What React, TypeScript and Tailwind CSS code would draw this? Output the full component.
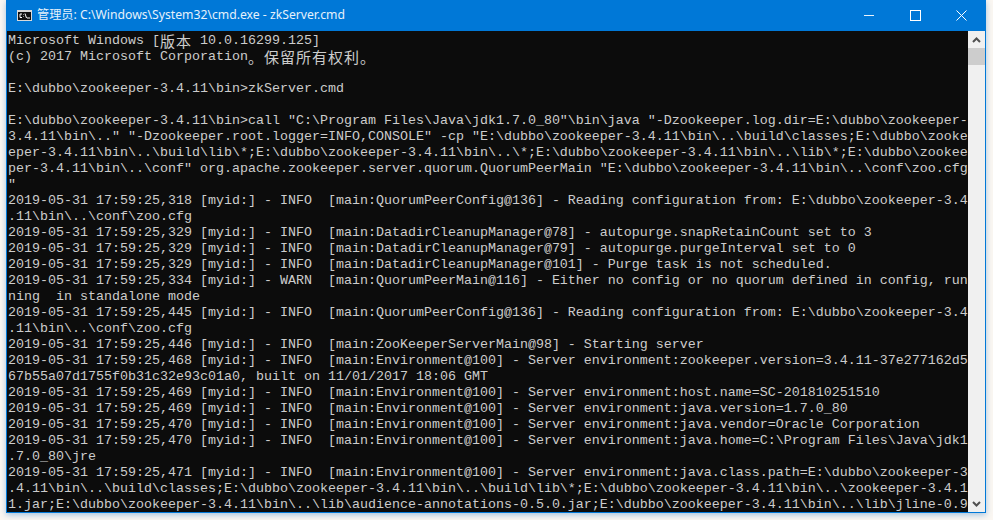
const lines: string[] = [
	"Microsoft Windows [版本 10.0.16299.125]",
	"(c) 2017 Microsoft Corporation。保留所有权利。",
	"",
	"E:\\dubbo\\zookeeper-3.4.11\\bin>zkServer.cmd",
	"",
	"E:\\dubbo\\zookeeper-3.4.11\\bin>call \"C:\\Program Files\\Java\\jdk1.7.0_80\"\\bin\\java \"-Dzookeeper.log.dir=E:\\dubbo\\zookeeper-",
	"3.4.11\\bin\\..\" \"-Dzookeeper.root.logger=INFO,CONSOLE\" -cp \"E:\\dubbo\\zookeeper-3.4.11\\bin\\..\\build\\classes;E:\\dubbo\\zooke",
	"eper-3.4.11\\bin\\..\\build\\lib\\*;E:\\dubbo\\zookeeper-3.4.11\\bin\\..\\*;E:\\dubbo\\zookeeper-3.4.11\\bin\\..\\lib\\*;E:\\dubbo\\zookee",
	"per-3.4.11\\bin\\..\\conf\" org.apache.zookeeper.server.quorum.QuorumPeerMain \"E:\\dubbo\\zookeeper-3.4.11\\bin\\..\\conf\\zoo.cfg",
	"\"",
	"2019-05-31 17:59:25,318 [myid:] - INFO  [main:QuorumPeerConfig@136] - Reading configuration from: E:\\dubbo\\zookeeper-3.4",
	".11\\bin\\..\\conf\\zoo.cfg",
	"2019-05-31 17:59:25,329 [myid:] - INFO  [main:DatadirCleanupManager@78] - autopurge.snapRetainCount set to 3",
	"2019-05-31 17:59:25,329 [myid:] - INFO  [main:DatadirCleanupManager@79] - autopurge.purgeInterval set to 0",
	"2019-05-31 17:59:25,329 [myid:] - INFO  [main:DatadirCleanupManager@101] - Purge task is not scheduled.",
	"2019-05-31 17:59:25,334 [myid:] - WARN  [main:QuorumPeerMain@116] - Either no config or no quorum defined in config, run",
	"ning  in standalone mode",
	"2019-05-31 17:59:25,445 [myid:] - INFO  [main:QuorumPeerConfig@136] - Reading configuration from: E:\\dubbo\\zookeeper-3.4",
	".11\\bin\\..\\conf\\zoo.cfg",
	"2019-05-31 17:59:25,446 [myid:] - INFO  [main:ZooKeeperServerMain@98] - Starting server",
	"2019-05-31 17:59:25,468 [myid:] - INFO  [main:Environment@100] - Server environment:zookeeper.version=3.4.11-37e277162d5",
	"67b55a07d1755f0b31c32e93c01a0, built on 11/01/2017 18:06 GMT",
	"2019-05-31 17:59:25,469 [myid:] - INFO  [main:Environment@100] - Server environment:host.name=SC-201810251510",
	"2019-05-31 17:59:25,469 [myid:] - INFO  [main:Environment@100] - Server environment:java.version=1.7.0_80",
	"2019-05-31 17:59:25,470 [myid:] - INFO  [main:Environment@100] - Server environment:java.vendor=Oracle Corporation",
	"2019-05-31 17:59:25,470 [myid:] - INFO  [main:Environment@100] - Server environment:java.home=C:\\Program Files\\Java\\jdk1",
	".7.0_80\\jre",
	"2019-05-31 17:59:25,471 [myid:] - INFO  [main:Environment@100] - Server environment:java.class.path=E:\\dubbo\\zookeeper-3",
	".4.11\\bin\\..\\build\\classes;E:\\dubbo\\zookeeper-3.4.11\\bin\\..\\build\\lib\\*;E:\\dubbo\\zookeeper-3.4.11\\bin\\..\\zookeeper-3.4.1",
	"1.jar;E:\\dubbo\\zookeeper-3.4.11\\bin\\..\\lib\\audience-annotations-0.5.0.jar;E:\\dubbo\\zookeeper-3.4.11\\bin\\..\\lib\\jline-0.9",
];

// wide chars take two console cells, so each gets its own 16px box
function ConsoleLine({ text }: { text: string }) {
	const parts = text.split(/([\u3000-\u303f\u4e00-\u9fff])/);
	return (
		<div className="h-4 whitespace-pre leading-4">
			{parts.map((part, i) =>
				i % 2 === 1 ? (
					<span key={i} className="inline-block h-4 w-4 align-top text-[15px] leading-4 font-['Noto_Sans_CJK_SC',sans-serif]">
						{part}
					</span>
				) : (
					<span key={i}>{part}</span>
				),
			)}
		</div>
	);
}

function CmdIcon() {
	return (
		<svg viewBox="0 0 15 11" className="h-[11px] w-[15px] shrink-0" aria-hidden="true">
			<rect x="0" y="0" width="15" height="11" fill="#d9d9d9" />
			<rect x="1" y="2" width="13" height="8" fill="#111111" />
			<path d="M5 4H3v3.5h2M6.5 4.5v.5M6.5 6.5V7M8 3.5l1.5 4.500M10 8h3" fill="none" stroke="#ffffff" strokeWidth="1" />
		</svg>
	);
}

function WindowButtons() {
	return (
		<div className="flex items-center">
			<div className="flex w-[46px] justify-center">
				<div className="h-px w-[10px] bg-[#e8f2fb]" />
			</div>
			<div className="flex w-[46px] justify-center">
				<div className="h-[11px] w-[11px] border border-white" />
			</div>
			<div className="flex w-[46px] justify-center">
				<svg viewBox="0 0 11 11" className="h-[11px] w-[11px]" aria-hidden="true">
					<path d="M.5.500l10 10M10.500.500l-10 10" fill="none" stroke="#ffffff" strokeWidth="1" />
				</svg>
			</div>
		</div>
	);
}

function ScrollBar() {
	return (
		<div className="flex w-[17px] shrink-0 flex-col bg-[#f0f0f0]">
			<div className="flex h-[17px] items-center justify-center">
				<svg viewBox="0 0 9 6" className="h-[6px] w-[9px]" aria-hidden="true">
					<path d="M1 5l3.500-3.500L8 5" fill="none" stroke="#505050" strokeWidth="2" />
				</svg>
			</div>
			<div className="h-[17px] bg-[#cdcdcd]" />
			<div className="flex-1" />
			<div className="flex h-[17px] items-center justify-center">
				<svg viewBox="0 0 9 6" className="h-[6px] w-[9px]" aria-hidden="true">
					<path d="M1 1l3.500 3.500L8 1" fill="none" stroke="#505050" strokeWidth="2" />
				</svg>
			</div>
		</div>
	);
}

export default function App() {
	return (
		<div className="h-[520px] w-[993px] overflow-hidden bg-[#fbf7f2] pb-[7px] pl-[6px] pr-[7px]">
			<div className="flex h-full flex-col border-x border-b border-[#0078d7] shadow-[0_2px_6px_rgba(60,130,200,0.45)]">
				<div className="flex h-[31px] shrink-0 items-center bg-[#0078d7] pl-[10px] pr-[1px]">
					<CmdIcon />
					<div className="ml-[5px] flex-1 whitespace-pre text-[12.2px] text-[#e6f1fb] font-['Noto_Sans','Noto_Sans_CJK_SC',sans-serif]">
						管理员: C:\Windows\System32\cmd.exe - zkServer.cmd
					</div>
					<WindowButtons />
				</div>
				<div className="flex min-h-0 flex-1">
					<div className="min-w-0 flex-1 overflow-hidden bg-[#0c0c0c] pl-px pt-[2px] text-[13.33px] text-[#cccccc] font-['Liberation_Mono',monospace]">
						{lines.map((line, i) => (
							<ConsoleLine key={i} text={line} />
						))}
					</div>
					<ScrollBar />
				</div>
			</div>
		</div>
	);
}
